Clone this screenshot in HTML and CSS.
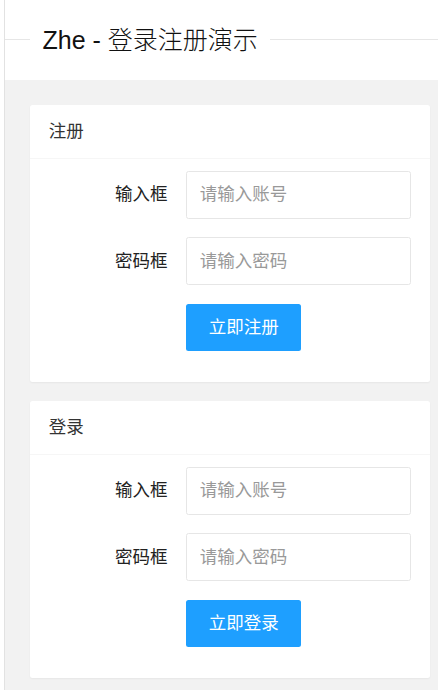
FILE: index.html
```html
<!DOCTYPE html>
<html lang="zh-CN">
<head>
    <meta charset="UTF-8">
    <meta name="viewport" content="width=device-width, initial-scale=1.0">
    <title>Zhe - 登录注册演示</title>
    <link rel="stylesheet" href="styles.css">
</head>
<body>
    <div class="page">
        <div class="field-title">
            <span class="field-legend">Zhe - 登录注册演示</span>
        </div>

        <div class="content">
            <div class="card">
                <div class="card-header">注册</div>
                <form class="card-body" onsubmit="return false;">
                    <div class="form-item">
                        <label class="form-label">输入框</label>
                        <div class="input-block">
                            <input type="text" class="input" placeholder="请输入账号">
                        </div>
                    </div>
                    <div class="form-item">
                        <label class="form-label">密码框</label>
                        <div class="input-block">
                            <input type="password" class="input" placeholder="请输入密码">
                        </div>
                    </div>
                    <div class="form-item">
                        <div class="input-block">
                            <button class="btn">立即注册</button>
                        </div>
                    </div>
                </form>
            </div>

            <div class="card">
                <div class="card-header">登录</div>
                <form class="card-body" onsubmit="return false;">
                    <div class="form-item">
                        <label class="form-label">输入框</label>
                        <div class="input-block">
                            <input type="text" class="input" placeholder="请输入账号">
                        </div>
                    </div>
                    <div class="form-item">
                        <label class="form-label">密码框</label>
                        <div class="input-block">
                            <input type="password" class="input" placeholder="请输入密码">
                        </div>
                    </div>
                    <div class="form-item">
                        <div class="input-block">
                            <button class="btn">立即登录</button>
                        </div>
                    </div>
                </form>
            </div>
        </div>
    </div>
</body>
</html>
```

FILE: styles.css
```css
body {
    margin: 0;
    background-color: #fff;
    color: #333;
    font-family: "Liberation Sans", "Noto Sans CJK SC", sans-serif;
}
.page {
    margin-left: 4px;
    border-left: 1px solid #e2e2e2;
    min-height: 690px;
    background-color: #f2f2f2;
}
.field-title {
    display: flex;
    align-items: center;
    height: 79px;
    padding-bottom: 1px;
    background-color: #fff;
}
.field-title::before {
    content: "";
    width: 25px;
    height: 1px;
    background-color: #e6e6e6;
}
.field-title::after {
    content: "";
    flex: 1;
    height: 1px;
    background-color: #e6e6e6;
}
.field-legend {
    padding: 0 12.5px;
    font-size: 25px;
    font-weight: 300;
    color: #111;
    line-height: 30px;
}
.content {
    padding: 25px 8px 1px 25px;
}
.card {
    background-color: #fff;
    border-radius: 2.5px;
    box-shadow: 0 1px 2px 0 rgba(0,0,0,0.05);
    margin-bottom: 18.75px;
}
.card-header {
    height: 52.5px;
    line-height: 52.5px;
    padding: 0 18.75px;
    border-bottom: 1px solid #f6f6f6;
    font-size: 17.5px;
    color: #333;
}
.card-body {
    padding: 12.5px 18.75px;
}
.form-item {
    display: flex;
    margin-bottom: 18.75px;
}
.form-label {
    width: 100px;
    padding: 11.25px 18.75px;
    line-height: 25px;
    text-align: right;
    font-size: 17.5px;
    color: #222;
}
.input-block {
    flex: 1;
    margin-left: 137.5px;
}
.form-label + .input-block {
    margin-left: 0;
}
.input {
    display: block;
    width: 100%;
    height: 47.5px;
    box-sizing: border-box;
    padding-left: 12.5px;
    border: 1px solid #e6e6e6;
    border-radius: 2.5px;
    font-family: inherit;
    font-size: 17.5px;
    color: #333;
    outline: none;
}
.input::placeholder {
    color: #999;
}
.btn {
    height: 47.5px;
    line-height: 47.5px;
    padding: 0 22.5px;
    border: none;
    border-radius: 2.5px;
    background-color: #1e9fff;
    color: #fff;
    font-family: inherit;
    font-size: 17.5px;
    cursor: pointer;
}
```
